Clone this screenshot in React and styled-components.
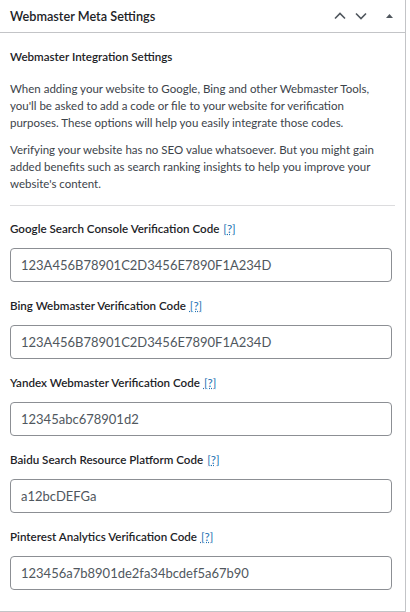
import React from "react";
import styled, { createGlobalStyle } from "styled-components";

const Global = createGlobalStyle`
  html, body { margin: 0; padding: 0; background: #fff; }
  body { font-family: "Lato", "Open Sans", sans-serif; color: #3c434a; }
  * { box-sizing: border-box; }
`;

const Panel = styled.div`
  width: 406px;
  height: 612px;
  border-right: 1px solid #c3c4c7;
  border-bottom: 1px solid #c3c4c7;
  background: #fff;
  display: flex;
  flex-direction: column;
`;

const Header = styled.div`
  height: 33px;
  flex: none;
  display: flex;
  align-items: center;
  justify-content: space-between;
  padding: 0 2px 0 10px;
  border-bottom: 1px solid #c3c4c7;
`;

const Title = styled.h2`
  margin: 0;
  font-size: 12.7px;
  font-weight: 600;
  color: #1d2327;
`;

const Actions = styled.div`
  display: flex;
  align-items: center;
  gap: 7px;
  color: #50575e;
`;

const IconBtn = styled.span`
  display: flex;
  align-items: center;
  justify-content: center;
  width: ${(p) => p.$w || 14}px;
  height: 20px;
`;

const Body = styled.div`
  padding: 15px 10px 0 10px;
  display: flex;
  flex-direction: column;
`;

const SubTitle = styled.h3`
  margin: 0 0 15px;
  font-size: 11.6px;
  line-height: 18px;
  font-weight: 600;
  color: #1d2327;
`;

const Para = styled.p`
  margin: 0 0 11px;
  font-size: 11.5px;
  line-height: 16.8px;
  color: #3c434a;
`;

const Separator = styled.hr`
  margin: 1px 0 14px;
  border: none;
  border-top: 1px solid #dcdcde;
  height: 0;
`;

const Field = styled.div`
  display: flex;
  flex-direction: column;
  margin-bottom: 15px;
  padding-right: 3px;
`;

const Label = styled.label`
  font-size: 11.6px;
  line-height: 18px;
  font-weight: 600;
  color: #1d2327;
  margin-bottom: 10px;
`;

const Help = styled.a`
  color: #2271b1;
  font-weight: 400;
  text-decoration: underline;
  text-decoration-style: dotted;
  margin-left: 4px;
  cursor: help;
`;

const Input = styled.input`
  height: 34px;
  width: 100%;
  border: 1px solid #8c8f94;
  border-radius: 4px;
  padding: 0 10px;
  font-family: "Lato", "Open Sans", sans-serif;
  font-size: 13px;
  color: #50575e;
  background: #fff;
  outline: none;
`;

const Chevron = ({ up }) => (
  <svg width="12" height="8" viewBox="0 0 12 8" fill="none">
    <path
      d={up ? "M1 6.5L6 1.5L11 6.5" : "M1 1.5L6 6.5L11 1.5"}
      stroke="#50575e"
      strokeWidth="1.6"
    />
  </svg>
);

const Triangle = () => (
  <svg width="7" height="4" viewBox="0 0 7 4">
    <path d="M0 4L3.5 0L7 4Z" fill="#50575e" />
  </svg>
);

const fields = [
  ["Google Search Console Verification Code", "123A456B78901C2D3456E7890F1A234D"],
  ["Bing Webmaster Verification Code", "123A456B78901C2D3456E7890F1A234D"],
  ["Yandex Webmaster Verification Code", "12345abc678901d2"],
  ["Baidu Search Resource Platform Code", "a12bcDEFGa"],
  ["Pinterest Analytics Verification Code", "123456a7b8901de2fa34bcdef5a67b90"],
];

export default function App() {
  return (
    <>
      <Global />
      <Panel>
        <Header>
          <Title>Webmaster Meta Settings</Title>
          <Actions>
            <IconBtn $w={14}><Chevron up /></IconBtn>
            <IconBtn $w={14}><Chevron /></IconBtn>
            <IconBtn $w={28}><Triangle /></IconBtn>
          </Actions>
        </Header>
        <Body>
          <SubTitle>Webmaster Integration Settings</SubTitle>
          <Para>
            When adding your website to Google, Bing and other Webmaster Tools,
            you'll be asked to add a code or file to your website for
            verification purposes. These options will help you easily integrate
            those codes.
          </Para>
          <Para>
            Verifying your website has no SEO value whatsoever. But you might
            gain added benefits such as search ranking insights to help you
            improve your website's content.
          </Para>
          <Separator />
          {fields.map(([label, value]) => (
            <Field key={label}>
              <Label>
                {label}
                <Help href="#">[?]</Help>
              </Label>
              <Input defaultValue={value} readOnly />
            </Field>
          ))}
        </Body>
      </Panel>
    </>
  );
}
